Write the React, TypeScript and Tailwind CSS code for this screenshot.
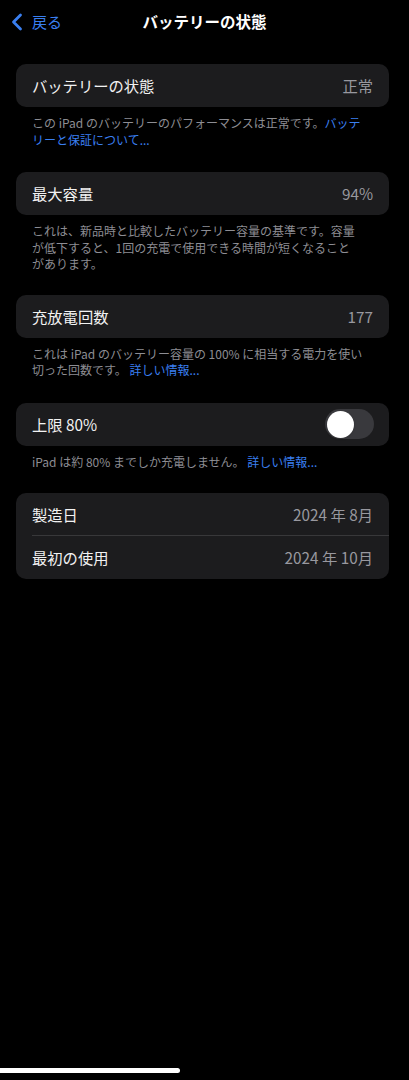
import { ChevronLeft } from "lucide-react";

const font = { fontFamily: '"Noto Sans CJK JP", "Noto Sans", sans-serif' };

const Row = ({ label, value, divider }: { label: string; value?: string; divider?: boolean }) => {
  return (
    <div className="relative flex h-[43px] items-center justify-between px-4">
      <span className="text-[15.3px] text-[#f2f2f2]">{label}</span>
      {value && <span className="text-[15.3px] text-[#98989f]">{value}</span>}
      {divider && <div className="absolute bottom-0 left-4 right-0 h-px bg-[#38383a]" />}
    </div>
  );
};

// line breaks placed where the system wraps them
const Footer = ({ children }: { children: React.ReactNode }) => (
  <p className="pl-4 pr-[12px] pt-[8px] text-[12px] leading-[16.5px] text-[#8d8d93]">{children}</p>
);

const Link = ({ children }: { children: React.ReactNode }) => (
  <span className="text-[#3a7ff0]">{children}</span>
);

const App = () => {
  return (
    <div className="flex min-h-[1080px] w-[409px] flex-col bg-black" style={font}>
      <header className="relative flex h-[44px] items-center justify-center">
        <div className="absolute left-[3px] top-[8px] flex items-center text-[#3a7ff0]">
          <ChevronLeft size={28} strokeWidth={2.4} />
          <span className="ml-[1px] text-[15px]">戻る</span>
        </div>
        <h1 className="text-[15.5px] font-semibold text-white">バッテリーの状態</h1>
      </header>

      <main className="mt-[20px] pl-4 pr-5">
        <section className="mb-[24px]">
          <div className="rounded-[10px] bg-[#1c1c1e]">
            <Row label="バッテリーの状態" value="正常" />
          </div>
          <Footer>
            この iPad のバッテリーのパフォーマンスは正常です。<Link>バッテ<br />リーと保証について...</Link>
          </Footer>
        </section>

        <section className="mb-[22px]">
          <div className="rounded-[10px] bg-[#1c1c1e]">
            <Row label="最大容量" value="94%" />
          </div>
          <Footer>
            これは、新品時と比較したバッテリー容量の基準です。容量
            <br />
            が低下すると、1回の充電で使用できる時間が短くなること
            <br />
            があります。
          </Footer>
        </section>

        <section className="mb-[24px]">
          <div className="rounded-[10px] bg-[#1c1c1e]">
            <Row label="充放電回数" value="177" />
          </div>
          <Footer>
            これは iPad のバッテリー容量の 100% に相当する電力を使い
            <br />
            切った回数です。 <Link>詳しい情報...</Link>
          </Footer>
        </section>

        <section className="mb-[23px]">
          <div className="flex h-[43px] items-center justify-between rounded-[10px] bg-[#1c1c1e] pl-4 pr-[15px]">
            <span className="text-[15.3px] text-[#f2f2f2]">上限 80%</span>
            <div className="flex h-[30px] w-[49px] items-center rounded-full bg-[#39393d] px-[2px]">
              <div className="h-[27px] w-[27px] rounded-full bg-white shadow" />
            </div>
          </div>
          <Footer>
            iPad は約 80% までしか充電しません。 <Link>詳しい情報...</Link>
          </Footer>
        </section>

        <section>
          <div className="rounded-[10px] bg-[#1c1c1e]">
            <Row label="製造日" value="2024 年 8月" divider />
            <Row label="最初の使用" value="2024 年 10月" />
          </div>
        </section>
      </main>

      <div className="mb-[7px] mt-auto h-[5px] w-[180px] rounded-r-full bg-white" />
    </div>
  );
};

export default App;
